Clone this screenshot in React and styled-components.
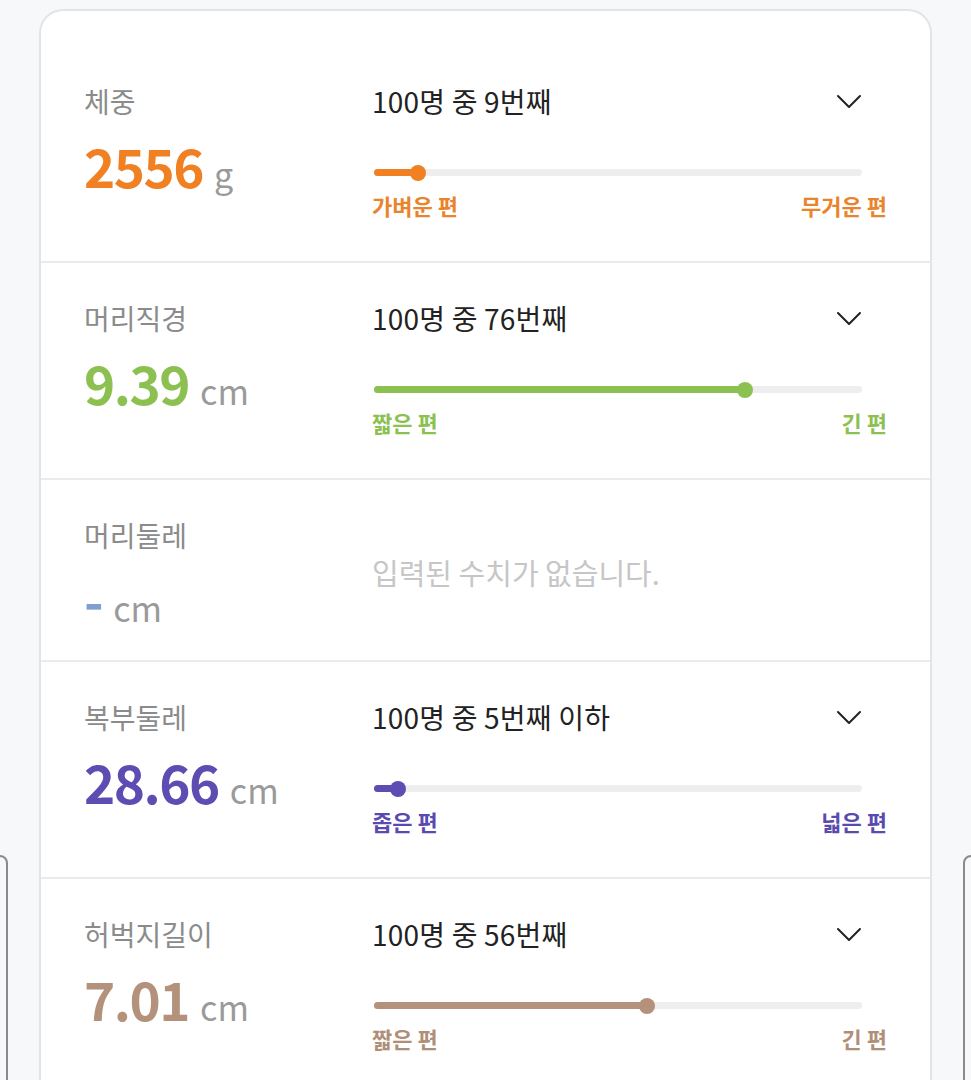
import React from 'react'
import styled, { createGlobalStyle } from 'styled-components'

const GlobalStyle = createGlobalStyle`
  html, body {
    margin: 0;
    padding: 0;
    background: #f7f8fa;
    font-family: "Noto Sans CJK KR", "Noto Sans", sans-serif;
  }
`

const rows = [
  {
    label: '체중', value: '2556', unit: 'g', color: '#f08022', soft: '#e9842c',
    rank: 9, text: '100명 중 9번째', low: '가벼운 편', high: '무거운 편',
  },
  {
    label: '머리직경', value: '9.39', unit: 'cm', color: '#8cc152', soft: '#8cc152',
    rank: 76, text: '100명 중 76번째', low: '짧은 편', high: '긴 편',
  },
  {
    label: '머리둘레', value: '-', unit: 'cm', color: '#7f9ed1', empty: true,
  },
  {
    label: '복부둘레', value: '28.66', unit: 'cm', color: '#5d4db3', soft: '#5a4aaf',
    rank: 5, text: '100명 중 5번째 이하', low: '좁은 편', high: '넓은 편',
  },
  {
    label: '허벅지길이', value: '7.01', unit: 'cm', color: '#b3917a', soft: '#af8f78',
    rank: 56, text: '100명 중 56번째', low: '짧은 편', high: '긴 편',
  },
]

function App() {
  return (
    <Page>
      <GlobalStyle />
      <PeekCard side="left" />
      <PeekCard side="right" />
      <Card>
        {rows.map((r) => (
          <Row key={r.label}>
            <Left>
              <Label>{r.label}</Label>
              <ValueLine>
                <Value color={r.color}>{r.value}</Value>
                <Unit>{r.unit}</Unit>
              </ValueLine>
            </Left>
            {r.empty ? (
              <Empty>입력된 수치가 없습니다.</Empty>
            ) : (
              <SliderArea>
                <Header>
                  <Count>{r.text}</Count>
                  <svg width="26" height="15" viewBox="0 0 26 15">
                    <polyline points="2,2 13,13 24,2" fill="none" stroke="#222" strokeWidth="2" strokeLinecap="round" strokeLinejoin="round" />
                  </svg>
                </Header>
                <Track>
                  <Fill color={r.color} style={{ width: `${r.rank}%` }}>
                    <Thumb color={r.color} />
                  </Fill>
                </Track>
                <Ends color={r.soft}>
                  <span>{r.low}</span>
                  <span>{r.high}</span>
                </Ends>
              </SliderArea>
            )}
          </Row>
        ))}
      </Card>
    </Page>
  )
}

const Page = styled.div`
  position: relative;
  height: 1080px;
  overflow: hidden;
  padding: 9px 39px 0;
  box-sizing: border-box;
`

const PeekCard = styled.div`
  position: absolute;
  top: 855px;
  ${(p) => (p.side === 'left' ? 'left: -100px;' : 'right: -100px;')}
  width: 108px;
  height: 400px;
  border: 2px solid #8a8a8a;
  border-radius: 8px;
  box-sizing: border-box;
`

const Card = styled.div`
  position: relative;
  background: #fff;
  border: 2px solid #e2e4e7;
  border-bottom: none;
  border-radius: 24px 24px 0 0;
  padding-top: 35px;
  min-height: 1100px;
`

const Row = styled.div`
  display: grid;
  grid-template-columns: 288px 515px;
  padding: 38px 43px 23px;
  & + & {
    border-top: 2px solid #ebebeb;
  }
`

const Left = styled.div`
  display: flex;
  flex-direction: column;
  padding-bottom: 8px;
`

const Label = styled.div`
  font-size: 28px;
  line-height: 34px;
  color: #8b8b8b;
`

const ValueLine = styled.div`
  display: flex;
  align-items: baseline;
  margin-top: 17px;
  height: 60px;
`

const Value = styled.span`
  font-size: 53px;
  line-height: 60px;
  font-weight: 700;
  color: ${(p) => p.color};
  letter-spacing: -1.5px;
  margin-right: 11px;
`

const Unit = styled.span`
  font-size: 34px;
  color: #9a9a9a;
`

const SliderArea = styled.div`
  padding-bottom: 20px;
`

const Header = styled.div`
  display: flex;
  align-items: center;
  justify-content: space-between;
  width: 490px;
  height: 34px;
`

const Count = styled.span`
  font-size: 28px;
  line-height: 34px;
  color: #222;
  letter-spacing: 0.2px;
`

const Track = styled.div`
  position: relative;
  top: 4px;
  margin: 47px 0 9px 2px;
  width: 488px;
  height: 7px;
  border-radius: 4px;
  background: #eeeeee;
`

const Fill = styled.div`
  position: relative;
  height: 100%;
  border-radius: 4px;
  background: ${(p) => p.color};
`

const Thumb = styled.div`
  position: absolute;
  right: -8px;
  top: 50%;
  width: 16px;
  height: 16px;
  margin-top: -8px;
  border-radius: 50%;
  background: ${(p) => p.color};
`

const Ends = styled.div`
  display: flex;
  justify-content: space-between;
  margin-top: 20px;
  font-size: 22px;
  line-height: 26px;
  font-weight: 700;
  color: ${(p) => p.color};
`

const Empty = styled.div`
  align-self: center;
  font-size: 29px;
  color: #c6c6c6;
  padding-bottom: 12px;
`

export default App
